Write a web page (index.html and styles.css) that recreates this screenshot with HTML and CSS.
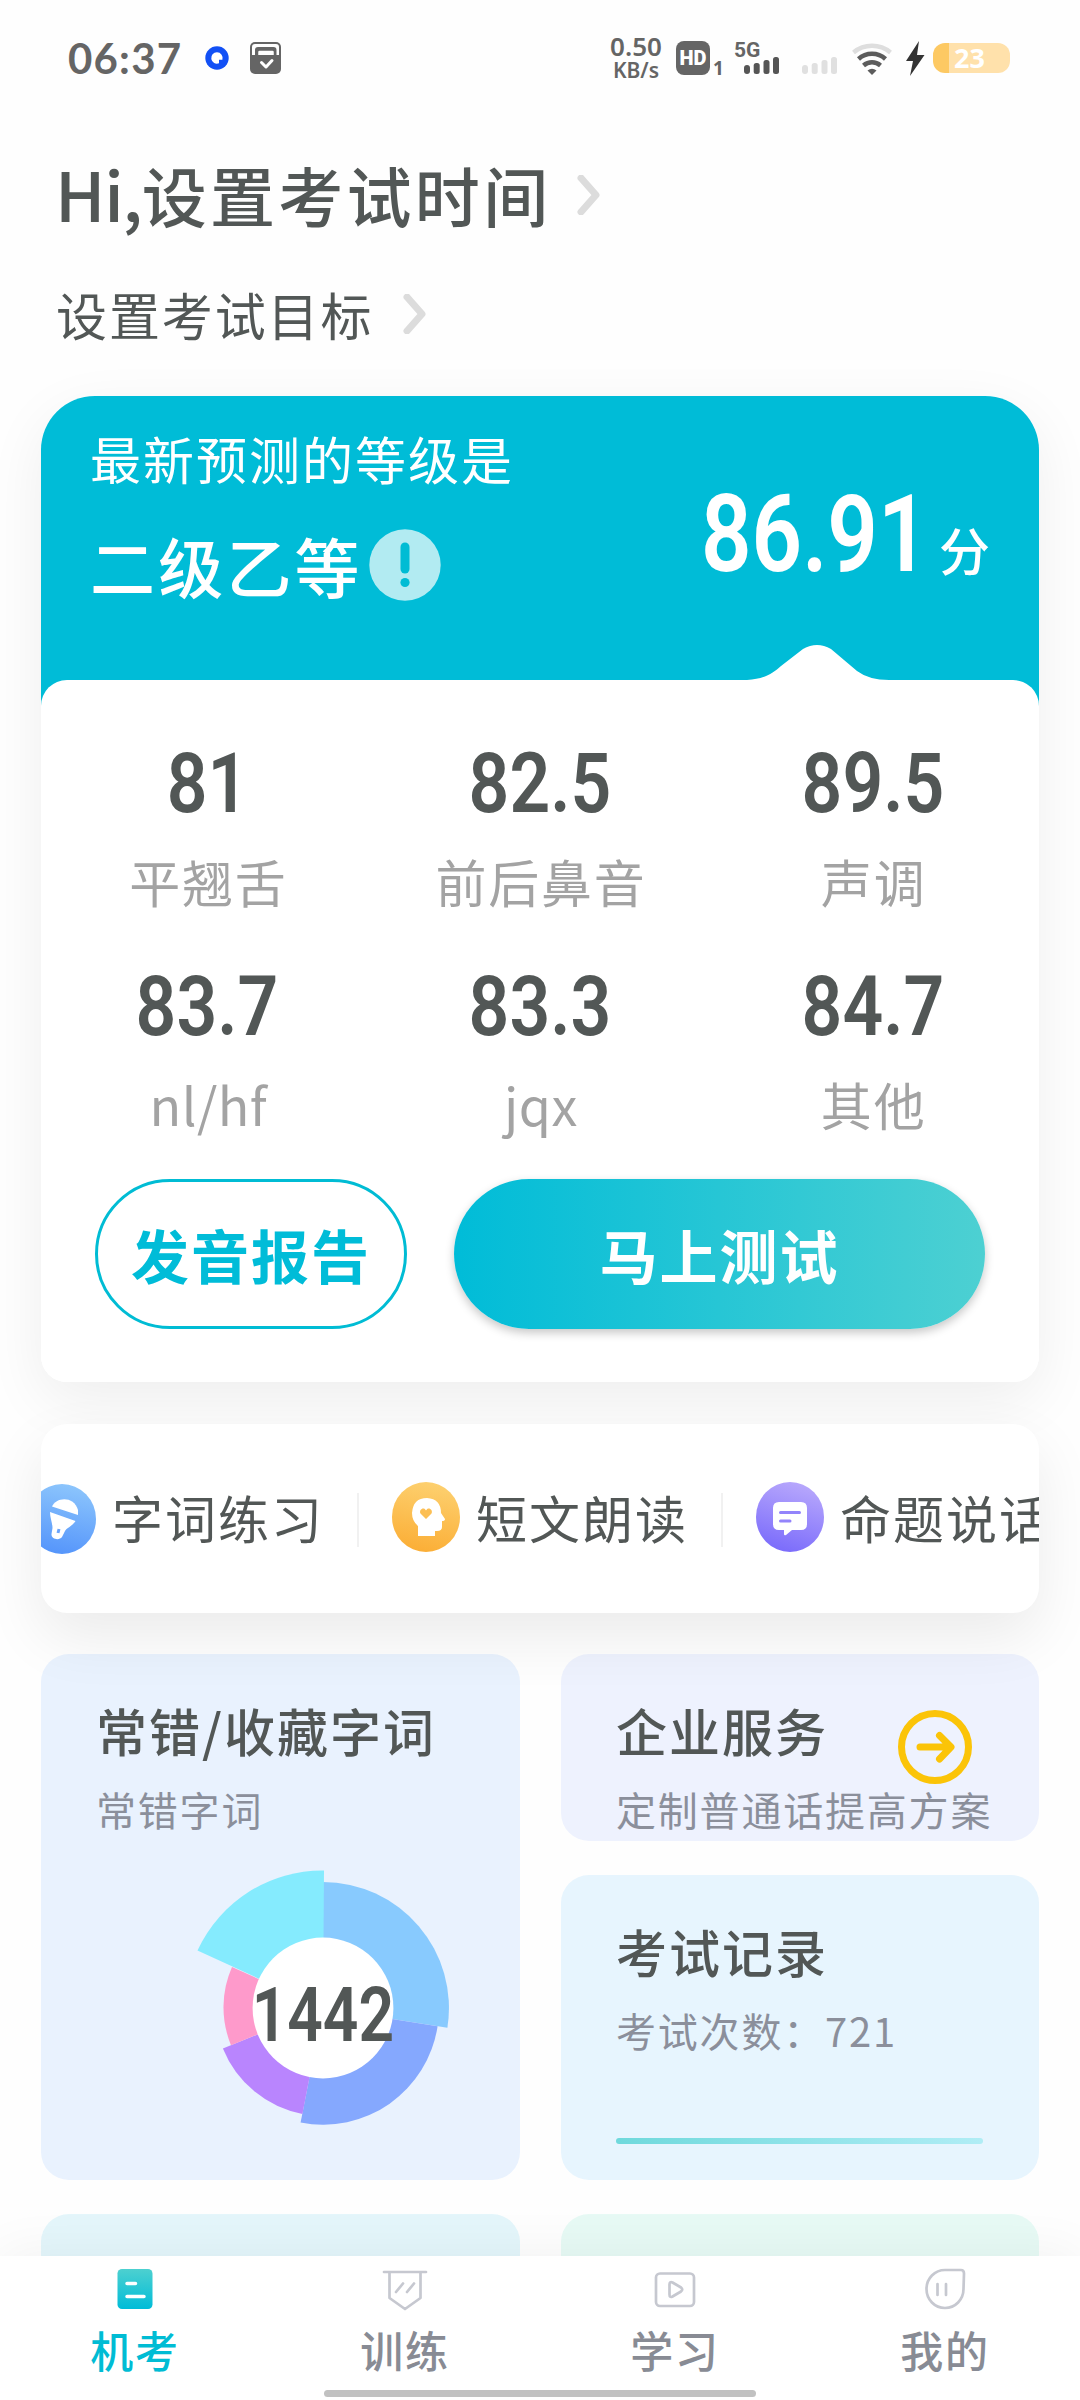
FILE: index.html
```html
<!DOCTYPE html>
<html lang="zh-CN">
<head>
<meta charset="utf-8">
<title>机考</title>
<link rel="stylesheet" href="styles.css">
</head>
<body>
<div class="screen">
  <header class="status">
    <span class="clock">06:37</span>
    <svg class="status-dot" width="24" height="24" viewBox="0 0 24 24"><circle cx="12" cy="12" r="11.7" fill="#1250f5"/><path d="M12 6.3a5.7 5.7 0 1 0 2 11v-3.6h3.4A5.7 5.7 0 0 0 12 6.3z" fill="#fff"/></svg>
    <svg class="status-box" width="34" height="34" viewBox="0 0 34 34"><rect x="1" y="1" width="31" height="32" rx="5" fill="#656565"/><path d="M3 14V6a3 3 0 0 1 3-3h21a3 3 0 0 1 3 3v8h-2.500V9a3 3 0 0 0-3-3H9a3 3 0 0 0-3 3v5z" fill="#fff"/><path d="M8.500 14v-3a2 2 0 0 1 2-2h13a2 2 0 0 1 2 2v3" fill="#fff" stroke="#656565" stroke-width="1.500"/><path d="M12.500 21.500l4.500 4.500 6-6.500" fill="none" stroke="#fff" stroke-width="3" stroke-linecap="round" stroke-linejoin="round"/></svg>
    <div class="status-right">
      <span class="speed"><b>0.50</b><i>KB/s</i></span>
      <span class="hd">HD</span><span class="sim">1</span>
      <span class="cell"><span class="net">5G</span><svg width="36" height="18" viewBox="0 0 36 18" fill="#555"><rect x="0" y="8" width="6" height="9" rx="3"/><rect x="9.700" y="6" width="6" height="11" rx="2.500"/><rect x="19.500" y="3" width="6" height="14" rx="2.500"/><rect x="29" y="0" width="6" height="17" rx="2.500"/></svg></span>
      <svg class="cell-off" width="36" height="18" viewBox="0 0 36 18" fill="#e0e0e0"><rect x="0" y="8" width="6" height="9" rx="3"/><rect x="9.700" y="6" width="6" height="11" rx="2.500"/><rect x="19.500" y="3" width="6" height="14" rx="2.500"/><rect x="29" y="0" width="6" height="17" rx="2.500"/></svg>
      <svg class="wifi" width="42" height="34" viewBox="0 0 42 34" fill="none" stroke="#5c5c5c" stroke-width="4.500"><path d="M2.500 10.500a29 29 0 0 1 37 0" stroke="#dedede"/><path d="M7.500 17a20 20 0 0 1 27 0"/><path d="M12.500 23.500a13 13 0 0 1 17 0"/><path d="M16.500 28.500q4.500-3.500 9 0L21 33z" fill="#5c5c5c" stroke="none"/></svg>
      <svg class="bolt" width="20" height="36" viewBox="0 0 20 36"><path d="M14 0L1 20h7L5 35 19.500 14H12z" fill="#333"/></svg>
      <span class="battery">23</span>
    </div>
  </header>

  <section class="greeting">
    <div class="greet-row greet-main"><span><span class="latin">Hi,</span>设置考试时间</span><svg class="chev chev-a" width="24" height="40" viewBox="0 0 24 40"><path d="M4 3l15 17L4 37" /></svg></div>
    <div class="greet-row greet-sub"><span>设置考试目标</span><svg class="chev chev-b" width="24" height="40" viewBox="0 0 24 40"><path d="M4 3l15 17L4 37" /></svg></div>
  </section>

  <section class="score-card">
    <div class="score-head">
      <div class="level">
        <p class="level-label">最新预测的等级是</p>
        <p class="level-value">二级乙等<svg width="72" height="72" viewBox="0 0 72 72"><circle cx="36" cy="36" r="35.700" fill="#b2ebf2"/><path d="M36 18v22" stroke="#00bcd4" stroke-width="9" stroke-linecap="round"/><circle cx="36" cy="53.500" r="4.600" fill="#00bcd4"/></svg></p>
      </div>
      <div class="score"><span class="num">86.91</span><span class="unit">分</span></div>
      <svg class="bump" width="142" height="36" viewBox="0 0 142 36"><path d="M0 35C18 34 26 28 34 21L56 4Q70-4 84 4l26 22Q122 35 142 35v1H0z" fill="#fff"/></svg>
    </div>
    <div class="score-body">
      <div class="stats">
        <div class="stat"><span class="num">81</span><span class="name">平翘舌</span></div>
        <div class="stat"><span class="num">82.5</span><span class="name">前后鼻音</span></div>
        <div class="stat"><span class="num">89.5</span><span class="name">声调</span></div>
        <div class="stat"><span class="num">83.7</span><span class="name name-latin">nl/hf</span></div>
        <div class="stat"><span class="num">83.3</span><span class="name name-latin">jqx</span></div>
        <div class="stat"><span class="num">84.7</span><span class="name">其他</span></div>
      </div>
      <div class="actions">
        <button class="btn btn-line">发音报告</button>
        <button class="btn btn-fill">马上测试</button>
      </div>
    </div>
  </section>

  <section class="modes">
    <div class="modes-track">
      <div class="mode mode-first">
        <svg width="68" height="70" viewBox="0 0 68 70"><defs><linearGradient id="b" x1=".6" y1="0" x2=".4" y2="1"><stop offset="0" stop-color="#8cc5fc"/><stop offset="1" stop-color="#5595fb"/></linearGradient></defs><ellipse cx="34" cy="35" rx="34" ry="35" fill="url(#b)"/><path d="M24 22.500C28 13 46 11.500 50 26v5z" fill="#fff"/><path d="M22 28l25.500 9c-3 5-9 7-10.500 10l-3 6c-3 4-11 2-10.500-3l1-6c0-5-2.500-10-2.500-16z" fill="#fff"/><path d="M31 45l-1 4" stroke="#6ba4fb" stroke-width="3"/></svg>
        <span>字词练习</span>
      </div>
      <i class="sep"></i>
      <div class="mode">
        <svg width="68" height="70" viewBox="0 0 68 70"><defs><linearGradient id="o" x1=".6" y1="0" x2=".4" y2="1"><stop offset="0" stop-color="#fdd06f"/><stop offset="1" stop-color="#fbae36"/></linearGradient></defs><ellipse cx="34" cy="35" rx="34" ry="35" fill="url(#o)"/><path d="M26 54V44q-6-5-6-13 1-15 15-15 14 1 14 15l4 6q0 2-3 2v6q0 4-5 4h-2v5z" fill="#fff"/><path d="M34 37l-5.500-5.500c-2-4 3.500-7.500 5.500-3 2-4.500 7.500-1 5.500 3z" fill="#fcbf54"/></svg>
        <span>短文朗读</span>
      </div>
      <i class="sep"></i>
      <div class="mode">
        <svg width="68" height="70" viewBox="0 0 68 70"><defs><linearGradient id="p" x1=".65" y1="0" x2=".35" y2="1"><stop offset="0" stop-color="#b8a8fc"/><stop offset="1" stop-color="#7a6bfb"/></linearGradient></defs><ellipse cx="34" cy="35" rx="34" ry="35" fill="url(#p)"/><path d="M23 20h22q6 0 6 6v16q0 6-6 6H36l-6 5q-2 1-2-1v-4h-5q-6 0-6-6V26q0-6 6-6z" fill="#fff"/><path d="M24.500 30.500h19M24.500 39h9.500" stroke="#9384fb" stroke-width="3" stroke-linecap="round"/></svg>
        <span>命题说话</span>
      </div>
    </div>
  </section>

  <section class="grid">
    <article class="tile tile-words">
      <h3>常错/收藏字词</h3>
      <p>常错字词</p>
      <div class="chart">
        <svg width="280" height="280" viewBox="-140 -140 280 280">
          <path d="M0 0V-126A126 126 0 0 1 124.400 19.700z" fill="#88cafe"/>
          <path d="M0 0L114.600 18.200A116 116 0 0 1 -22.400 114.600z" fill="#85a8fe"/>
          <path d="M0 0L-20.600 106A108 108 0 0 1 -100.100 40.500z" fill="#b985fe"/>
          <path d="M0 0L-92 37.200A99.500 99.500 0 0 1 -91 -41z" fill="#fe9acb"/>
          <path d="M0 0L-125.500 -57.500A137.500 137.500 0 0 1 1 -137.500z" fill="#85ebfe"/>
          <circle r="70.400" fill="#fff"/>
        </svg>
        <span class="num">1442</span>
      </div>
    </article>
    <article class="tile tile-biz">
      <h3>企业服务</h3>
      <p>定制普通话提高方案</p>
      <svg class="go" width="76" height="76" viewBox="0 0 76 76" fill="none" stroke="#fbc408" stroke-width="7" stroke-linecap="round" stroke-linejoin="round"><circle cx="38" cy="38" r="33.500"/><path d="M23 38h30M42.500 26.500L54 38 42.500 50"/></svg>
    </article>
    <article class="tile tile-record">
      <h3>考试记录</h3>
      <p>考试次数：721</p>
      <div class="line"></div>
    </article>
    <article class="tile tile-next-a"></article>
    <article class="tile tile-next-b"></article>
  </section>

  <nav class="tabs">
    <a class="tab active"><svg width="48" height="48" viewBox="0 0 48 48"><defs><linearGradient id="t" x1="0" y1="0" x2="0" y2="1"><stop offset="0" stop-color="#4dd0d0"/><stop offset="1" stop-color="#00bcd8"/></linearGradient></defs><rect x="6.500" y="5" width="35" height="40" rx="4.500" fill="url(#t)"/><path d="M16 19.500h8.500M16 32.500h17" stroke="#fff" stroke-width="3.500" stroke-linecap="round"/></svg><span>机考</span></a>
    <a class="tab"><svg width="48" height="48" viewBox="0 0 48 48"><path d="M3 8h42M8.500 8v26L24 45l15.500-11V8M15 28l7-8.500M26 28l7-8.500"/></svg><span>训练</span></a>
    <a class="tab"><svg width="48" height="48" viewBox="0 0 48 48"><rect x="5" y="9.500" width="38" height="32.500" rx="4"/><path d="M18.500 20.500v10q0 3.500 3 2l8.500-5q2.500-1.800 0-4l-8.500-5q-3-1.200-3 2z"/></svg><span>学习</span></a>
    <a class="tab"><svg width="48" height="48" viewBox="0 0 48 48"><path d="M24 6h16q3 0 3 3.500L42.500 25A18.500 19 0 1 1 24 6zM16.500 20v11M25 20v11"/></svg><span>我的</span></a>
  </nav>
  <div class="home-bar"></div>
</div>
</body>
</html>
```
FILE: styles.css
```css
* { box-sizing: border-box; margin: 0; padding: 0; }
body { background: #fefefe; font-family: "Noto Sans CJK SC", "Noto Sans", sans-serif; color: #525756; }
svg { display: block; flex: none; }
.screen { position: relative; width: 1080px; height: 2400px; overflow: hidden; display: flex; flex-direction: column; }
.screen > * { flex: none; }
.num { font-family: Roboto, sans-serif; font-weight: 600; display: inline-block; white-space: nowrap; }

.status { height: 153px; padding: 28px 70px 0 68px; display: flex; align-items: flex-start; color: #656565; }
.clock { width: 137px; font: 700 42px/60px Lato, sans-serif; letter-spacing: 1.200px; }
.status-dot { margin: 18px 20px 0 0; }
.status-box { margin-top: 13px; }
.status-right { margin-left: auto; display: flex; height: 60px; }
.speed { width: 60px; display: flex; flex-direction: column; align-items: center; margin-top: 5px; margin-right: 1px; }
.speed b { font: 600 26px/26px "Noto Sans", sans-serif; }
.speed i { font: 600 21px/22px "Noto Sans", sans-serif; }
.hd { width: 34px; height: 34px; margin: 13px 0 0 9px; border-radius: 8px; background: #656565; color: #fff; font: 900 20px/35px Roboto, sans-serif; text-align: center; }
.sim { width: 12px; margin: 29px 0 0 3px; font: 700 19px/22px "Noto Sans", sans-serif; }
.cell { width: 46px; margin: 12px 0 0 9px; display: flex; flex-direction: column; }
.net { font: 700 21px/20px Roboto, sans-serif; height: 17px; }
.cell svg { margin-left: 10px; }
.cell-off { margin: 29px 0 0 22px; }
.wifi { margin: 14px 0 0 13px; }
.bolt { margin: 13px 0 0 12px; }
.battery { width: 77px; height: 30px; margin: 15px 0 0 8px; border-radius: 12px; background: linear-gradient(90deg, #fdc963 16px, #ffe1ab 16px); color: #fff; font: 700 27px/30px "Noto Sans", sans-serif; padding-left: 21px; }

.greeting { height: 243px; padding-left: 55px; }
.greet-row { display: flex; align-items: center; }
.greet-main { height: 80px; font-size: 65px; font-weight: 500; letter-spacing: 3.300px; line-height: 80px; }
.latin { font-size: 68px; letter-spacing: -1.200px; }
.greet-sub { height: 60px; margin-top: 51px; font-size: 51px; line-height: 60px; letter-spacing: 1.900px; }
.greet-sub span { margin-left: 1px; }
.chev path { fill: none; stroke: #dcdcdc; stroke-width: 7; stroke-linecap: round; stroke-linejoin: round; }
.chev-a { margin: 3px 0 0 26px; }
.chev-b { margin: 0 0 0 30px; }

.score-card { position: relative; z-index: 1; width: 998px; height: 986px; margin: 0 41px; border-radius: 54px 54px 26px 26px; background: linear-gradient(#00bcd7 310px, #fff 310px); box-shadow: 0 18px 60px rgba(0, 0, 0, .065); }
.score-head { position: relative; height: 284px; padding: 32px 49px 0 49px; display: flex; justify-content: space-between; align-items: flex-start; color: #fff; }
.level-label { font-size: 51px; line-height: 60px; letter-spacing: 2px; }
.level-value { display: flex; align-items: center; gap: 6px; margin-top: 37px; font-size: 65px; line-height: 80px; font-weight: 500; letter-spacing: 3.200px; }
.score { display: flex; align-items: baseline; margin-top: 51px; }
.score .num { width: 238px; font-size: 108px; line-height: 110px; font-weight: 600; transform: scaleX(.82); transform-origin: left; }
.unit { font-size: 51px; line-height: 60px; font-weight: 500; }
.bump { position: absolute; left: 706px; top: 249px; }
.score-body { height: 702px; background: #fff; border-radius: 26px; padding-top: 59px; }
.stats { display: grid; grid-template-columns: repeat(3, 1fr); row-gap: 51px; }
.stat { display: flex; flex-direction: column; align-items: center; gap: 22px; }
.stat .num { font-size: 83px; line-height: 90px; transform: scaleX(.86); }
.name { font-size: 51px; line-height: 60px; letter-spacing: 1.800px; margin-left: 2px; color: #a3a3a3; }
.name-latin { font-size: 52px; letter-spacing: .500px; }
.actions { display: flex; gap: 47px; margin: 45px 54px 0; }
.btn { height: 150px; border: 0; border-radius: 75px; font: 700 58px/150px "Noto Sans CJK SC", sans-serif; letter-spacing: 2px; }
.btn-line { width: 312px; border: 3px solid #00bcd4; background: #fff; color: #00bcd8; line-height: 144px; }
.btn-fill { width: 531px; background: linear-gradient(90deg, #00bcd8, #4dd0d2); color: #fff; box-shadow: 0 4px 10px rgba(0, 0, 0, .22); }

.modes { position: relative; z-index: 2; width: 998px; height: 189px; margin: 42px 41px 0; border-radius: 26px; background: #fff; box-shadow: 0 24px 60px rgba(0, 0, 0, .08); overflow: hidden; }
.modes-track { width: 1110px; margin-left: -13px; padding-top: 58px; display: flex; }
.mode { display: flex; align-items: center; width: 297px; height: 70px; font-size: 51px; line-height: 60px; letter-spacing: 2px; }
.mode span { margin-left: 16px; white-space: nowrap; }
.mode-first svg { margin-top: 4px; }
.sep { width: 2px; height: 54px; margin: 11px 33px 0 32px; background: #f1f1f1; }

.grid { display: grid; grid-template-columns: 479px 478px; grid-template-rows: 187px 305px 200px; gap: 34px 41px; margin: 41px 41px 0; }
.tile { position: relative; border-radius: 28px; padding: 46px 0 0 55px; }
.tile h3 { font-size: 51px; line-height: 60px; font-weight: 500; letter-spacing: 2px; }
.tile p { margin-top: 24px; font-size: 40px; line-height: 50px; letter-spacing: 1.800px; color: #8b8f9b; white-space: nowrap; }
.tile-words { grid-row: span 2; background: #e9f2fe; }
.tile-biz { background: #eef2fe; }
.tile-record { background: #e7f5fe; }
.tile-next-a { background: #e4f6fb; }
.tile-next-b { background: #e7faf5; }
.chart { display: grid; place-items: center; width: 280px; height: 280px; margin: 34px 0 0 87px; }
.chart > * { grid-area: 1 / 1; }
.chart .num { font-size: 76px; line-height: 76px; transform: scaleX(.82); margin-top: 13px; z-index: 1; }
.go { position: absolute; left: 336px; top: 55px; }
.line { width: 367px; height: 6px; margin-top: 83px; border-radius: 3px; background: linear-gradient(90deg, #6fd9dc, #b0edf5); }

.tabs { position: absolute; z-index: 3; left: 0; right: 0; bottom: 0; height: 144px; padding-top: 8px; display: grid; grid-template-columns: repeat(4, 1fr); background: #fff; box-shadow: 0 0 56px rgba(0, 0, 0, .06); }
.tab { display: flex; flex-direction: column; align-items: center; gap: 9px; font-size: 43px; line-height: 56px; font-weight: 500; letter-spacing: 1.800px; color: #888b94; }
.tab.active { color: #00bcd4; }
.tab:not(.active) svg { fill: none; stroke: #c6c8d0; stroke-width: 2.700; stroke-linecap: round; stroke-linejoin: round; }
.home-bar { position: absolute; z-index: 4; left: 324px; top: 2390px; width: 432px; height: 7px; border-radius: 4px; background: #c1c1c1; }
```
